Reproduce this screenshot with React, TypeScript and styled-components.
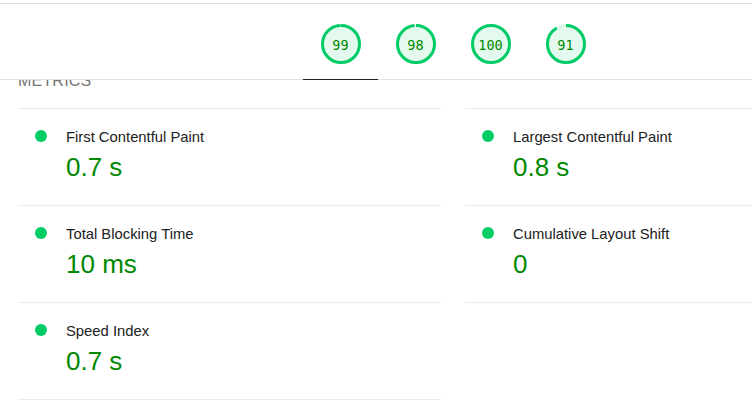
import React from "react";
import styled, { createGlobalStyle } from "styled-components";

const Global = createGlobalStyle`
  html, body { margin: 0; padding: 0; background: #fff; }
  body {
    overflow: hidden;
    font-family: "Liberation Sans", Arial, sans-serif;
    color: #212121;
  }
`;

const Page = styled.div`
  width: 752px;
  height: 412px;
  overflow: hidden;
  padding-top: 3px;
  box-sizing: border-box;
`;

const Header = styled.header`
  position: sticky;
  top: 0;
  z-index: 2;
  background: #fff;
  border-top: 1px solid #e0e0e0;
  border-bottom: 1px solid #e0e0e0;
  display: flex;
  padding-left: 303px;
  height: 75px;
`;

const Tab = styled.div<{ $active?: boolean }>`
  width: 75px;
  box-sizing: border-box;
  display: flex;
  justify-content: center;
  padding-top: 20px;
  margin-bottom: -1px;
  border-bottom: 1px solid ${(p) => (p.$active ? "#202124" : "transparent")};
`;

const GaugeWrap = styled.div`
  position: relative;
  width: 40px;
  height: 40px;
`;

const GaugeLabel = styled.span`
  position: absolute;
  inset: 0;
  display: flex;
  align-items: center;
  justify-content: center;
  font-family: "DejaVu Sans Mono", "Liberation Mono", monospace;
  font-size: 13.5px;
  color: #008800;
  padding-top: 1px;
`;

const Content = styled.main`
  position: relative;
  z-index: 1;
  margin-top: -11px;
  padding-left: 18px;
  width: 870px;
`;

const GroupTitle = styled.div`
  font-size: 16px;
  line-height: 24px;
  color: #757575;
  text-transform: uppercase;
  letter-spacing: 0.2px;
  margin-bottom: 15px;
`;

const Grid = styled.div`
  display: grid;
  grid-template-columns: 423px 423px;
  column-gap: 24px;
`;

const Metric = styled.div<{ $last?: boolean }>`
  border-top: 1px solid #ebebeb;
  border-bottom: 1px solid ${(p) => (p.$last ? "#ebebeb" : "transparent")};
  margin-bottom: -1px;
  display: grid;
  grid-template-columns: 48px 1fr;
  padding: 18px 0 22px;
  height: 98px;
  box-sizing: border-box;
`;

const Dot = styled.span`
  width: 12px;
  height: 12px;
  border-radius: 50%;
  background: #00cc66;
  margin: 3px 0 0 17px;
`;

const Body = styled.div`
  display: flex;
  flex-direction: column;
  gap: 4px;
`;

const Title = styled.div`
  font-size: 14.8px;
  line-height: 20px;
  color: #212121;
`;

const Value = styled.div`
  font-size: 26px;
  line-height: 32px;
  color: #008800;
`;

function Gauge({ score }: { score: number }) {
  const r = 55.5;
  const c = 2 * Math.PI * r;
  return (
    <GaugeWrap>
      <svg width="40" height="40" viewBox="0 0 120 120">
        <circle cx="60" cy="60" r={r} fill="rgba(0,204,102,0.1)" stroke="rgba(0,204,102,0.1)" strokeWidth="9" />
        <circle
          cx="60"
          cy="60"
          r={r}
          fill="none"
          stroke="#00cc66"
          strokeWidth="9"
          strokeDasharray={`${(score / 100) * c} ${c}`}
          transform="rotate(-90 60 60)"
        />
      </svg>
      <GaugeLabel>{score}</GaugeLabel>
    </GaugeWrap>
  );
}

const scores = [99, 98, 100, 91];
const metrics = [
  { title: "First Contentful Paint", value: "0.7 s" },
  { title: "Largest Contentful Paint", value: "0.8 s" },
  { title: "Total Blocking Time", value: "10 ms" },
  { title: "Cumulative Layout Shift", value: "0" },
  { title: "Speed Index", value: "0.7 s" },
];

export default function App() {
  return (
    <Page>
      <Global />
      <Header>
        {scores.map((s, i) => (
          <Tab key={i} $active={i === 0}>
            <Gauge score={s} />
          </Tab>
        ))}
      </Header>
      <Content>
        <GroupTitle>Metrics</GroupTitle>
        <Grid>
          {metrics.map((m, i) => (
            <Metric key={m.title} $last={i >= metrics.length - 2}>
              <Dot />
              <Body>
                <Title>{m.title}</Title>
                <Value>{m.value}</Value>
              </Body>
            </Metric>
          ))}
        </Grid>
      </Content>
    </Page>
  );
}
